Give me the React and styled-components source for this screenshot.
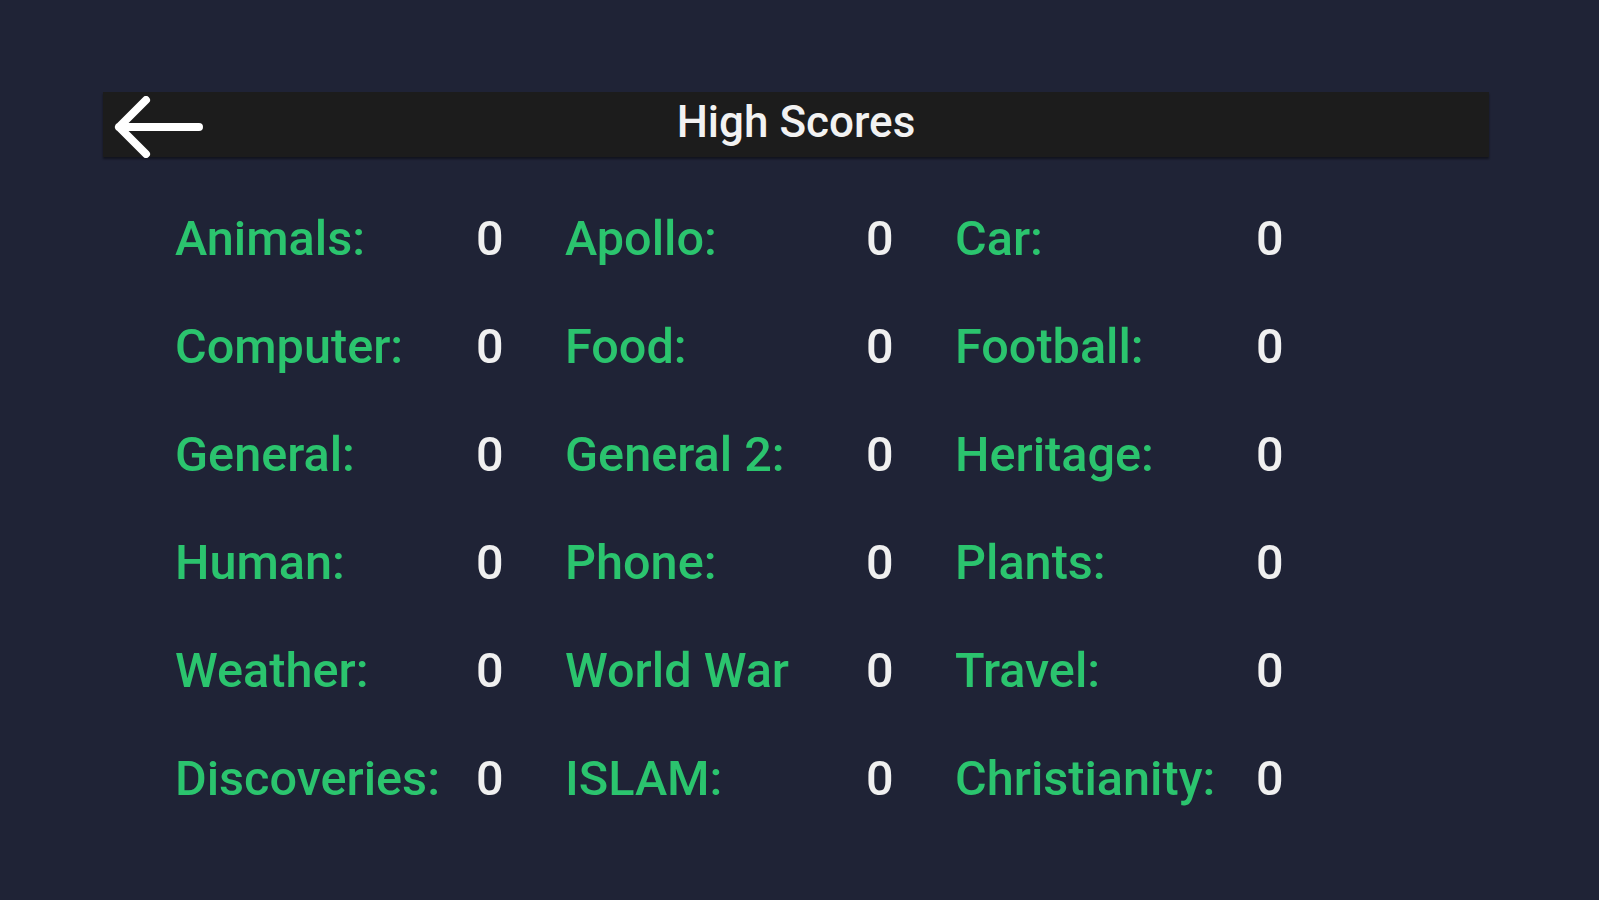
import React from "react";
import styled, { createGlobalStyle } from "styled-components";

const GlobalStyle = createGlobalStyle`
  html, body {
    margin: 0;
    padding: 0;
    background: #1f2336;
  }
  body {
    font-family: Roboto, "Noto Sans", sans-serif;
  }
`;

const Page = styled.div`
  min-height: 900px;
  background: #1f2336;
  padding: 92px 110px 0 103px;
  box-sizing: border-box;
`;

const Header = styled.div`
  height: 65px;
  background: #1c1c1c;
  box-shadow: 0 2px 2px rgba(0, 0, 0, 0.45);
  display: grid;
  grid-template-columns: 1fr auto 1fr;
  align-items: center;
`;

const BackButton = styled.button`
  justify-self: start;
  background: none;
  border: none;
  padding: 0 0 0 8px;
  margin-top: 4px;
  cursor: pointer;
  display: flex;
  align-items: center;
`;

const Title = styled.h1`
  margin: 0 0 6px;
  font-size: 44px;
  font-weight: 500;
  line-height: 50px;
  color: #f2f2f2;
`;

const ScoreGrid = styled.div`
  display: grid;
  grid-template-columns: repeat(3, 301px 89px);
  row-gap: 52px;
  padding: 54px 0 0 72px;
`;

const Label = styled.div`
  font-size: 48.6px;
  font-weight: 500;
  line-height: 56px;
  color: #2bc46e;
  white-space: nowrap;
`;

const Value = styled.div`
  font-size: 48.6px;
  font-weight: 500;
  line-height: 56px;
  color: #f0f0f0;
`;

const scores = [
  ["Animals:", 0], ["Apollo:", 0], ["Car:", 0],
  ["Computer:", 0], ["Food:", 0], ["Football:", 0],
  ["General:", 0], ["General 2:", 0], ["Heritage:", 0],
  ["Human:", 0], ["Phone:", 0], ["Plants:", 0],
  ["Weather:", 0], ["World War", 0], ["Travel:", 0],
  ["Discoveries:", 0], ["ISLAM:", 0], ["Christianity:", 0],
];

function BackArrow() {
  return (
    <svg width="94" height="62" viewBox="0 0 94 62" fill="none">
      <path
        d="M88 31 H8 M35 4 L8 31 L35 58"
        stroke="#ffffff"
        strokeWidth="8"
        strokeLinecap="round"
        strokeLinejoin="round"
      />
    </svg>
  );
}

export default function App() {
  return (
    <>
      <GlobalStyle />
      <Page>
        <Header>
          <BackButton aria-label="Back">
            <BackArrow />
          </BackButton>
          <Title>High Scores</Title>
          <div />
        </Header>
        <ScoreGrid>
          {scores.map(([name, score]) => (
            <React.Fragment key={name}>
              <Label>{name}</Label>
              <Value>{score}</Value>
            </React.Fragment>
          ))}
        </ScoreGrid>
      </Page>
    </>
  );
}
